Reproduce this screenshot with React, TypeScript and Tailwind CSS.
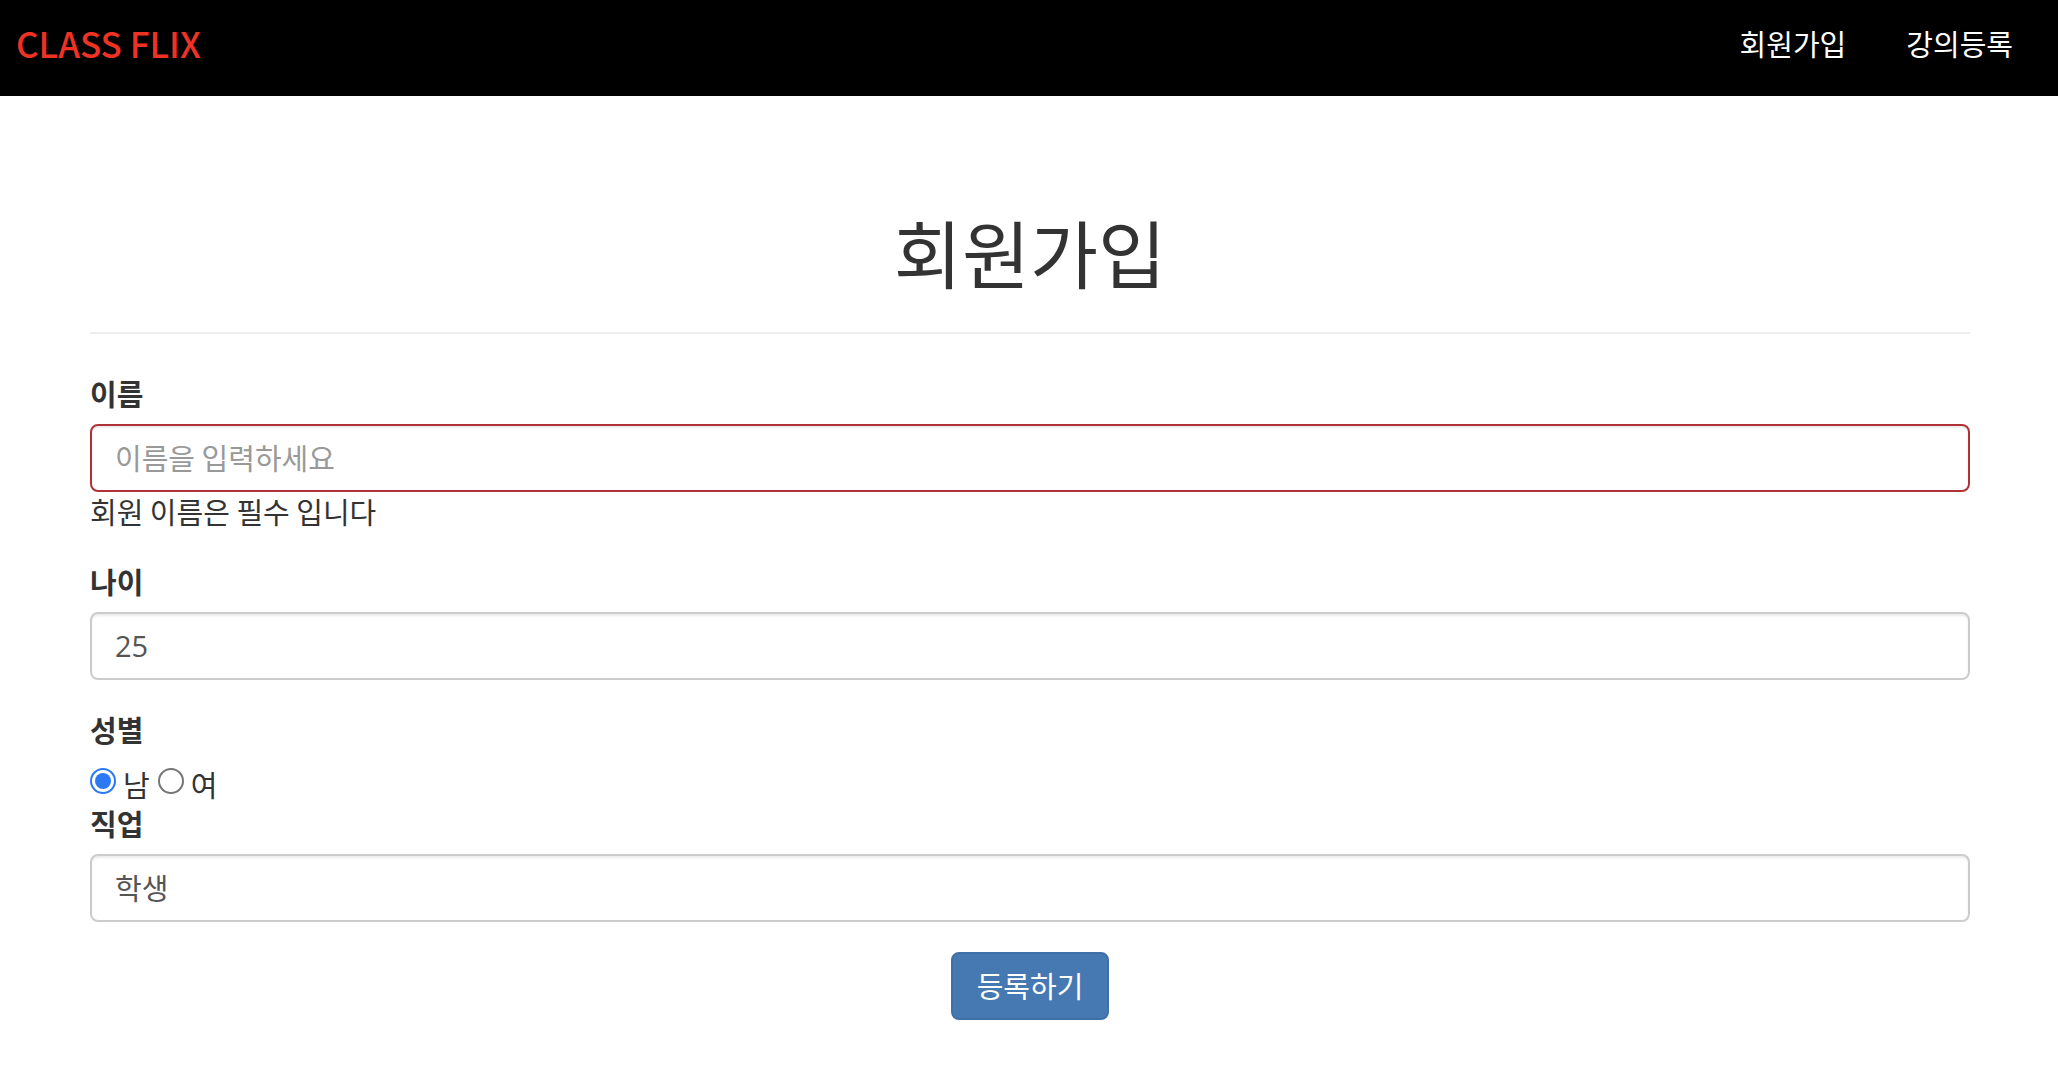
import React from 'react';

const FIELD =
  'block h-[68px] w-full rounded-lg border-2 bg-white px-[23px] pb-[2px] text-[29px] text-[#555555] shadow-[inset_0_2px_2px_rgba(0,0,0,0.075)] outline-none placeholder:text-[#999999] placeholder:opacity-100';

const LABEL = 'mb-3 block leading-[38px] font-bold';

const RADIO =
  "mt-2 grid size-[26px] shrink-0 appearance-none place-items-center self-start rounded-full border-2 border-[#767676] bg-white checked:border-[#2b78f6] checked:before:size-4 checked:before:rounded-full checked:before:bg-[#2b78f6] checked:before:content-['']";

function Header() {
  return (
    <header className="flex h-24 items-start justify-between bg-black pl-4 pr-[45px]">
      <a href="#" className="mt-6 text-[35px] leading-[38px] font-medium text-[#ee3224]">
        CLASS FLIX
      </a>
      <nav className="mt-6 flex gap-[60px] leading-[38px] text-white">
        <a href="#signup">회원가입</a>
        <a href="#lecture">강의등록</a>
      </nav>
    </header>
  );
}

export default function App() {
  return (
    <div className="min-h-screen bg-white font-['Noto_Sans_CJK_KR',sans-serif] text-[29px] leading-10 text-[#333333]">
      <Header />
      <main className="mr-[88px] ml-[90px] pt-[115px] pb-14">
        <h1 className="mb-[41px] text-center text-[74px] leading-20 font-normal">회원가입</h1>
        <hr className="mb-10 border-0 border-t-2 border-[#eeeeee]" />
        <form onSubmit={(e) => e.preventDefault()}>
          <div className="mb-[30px]">
            <label htmlFor="name" className={LABEL}>
              이름
            </label>
            <input
              id="name"
              type="text"
              placeholder="이름을 입력하세요"
              aria-invalid="true"
              aria-describedby="name-error"
              className={`${FIELD} border-[#b03237]`}
            />
            <p id="name-error" className="pb-[2px] leading-[38px]">
              회원 이름은 필수 입니다
            </p>
          </div>
          <div className="mb-[30px]">
            <label htmlFor="age" className={LABEL}>
              나이
            </label>
            <input
              id="age"
              type="text"
              defaultValue="25"
              className={`${FIELD} border-[#cccccc] font-['Open_Sans',sans-serif]`}
            />
          </div>
          <fieldset>
            <legend className={LABEL}>성별</legend>
            <div className="flex h-11 items-start gap-2">
              <label className="flex items-center gap-[7px] leading-[48px]">
                <input type="radio" name="gender" value="m" defaultChecked className={RADIO} />남
              </label>
              <label className="flex items-center gap-[7px] leading-[48px]">
                <input type="radio" name="gender" value="f" className={RADIO} />여
              </label>
            </div>
          </fieldset>
          <div className="mb-[30px]">
            <label htmlFor="job" className={LABEL}>
              직업
            </label>
            <input id="job" type="text" defaultValue="학생" className={`${FIELD} border-[#cccccc]`} />
          </div>
          <div className="text-center">
            <button
              type="submit"
              className="h-[68px] rounded-lg border-2 border-[#3f70a7] bg-[#4679b2] px-6 pb-[2px] text-white"
            >
              등록하기
            </button>
          </div>
        </form>
      </main>
    </div>
  );
}
